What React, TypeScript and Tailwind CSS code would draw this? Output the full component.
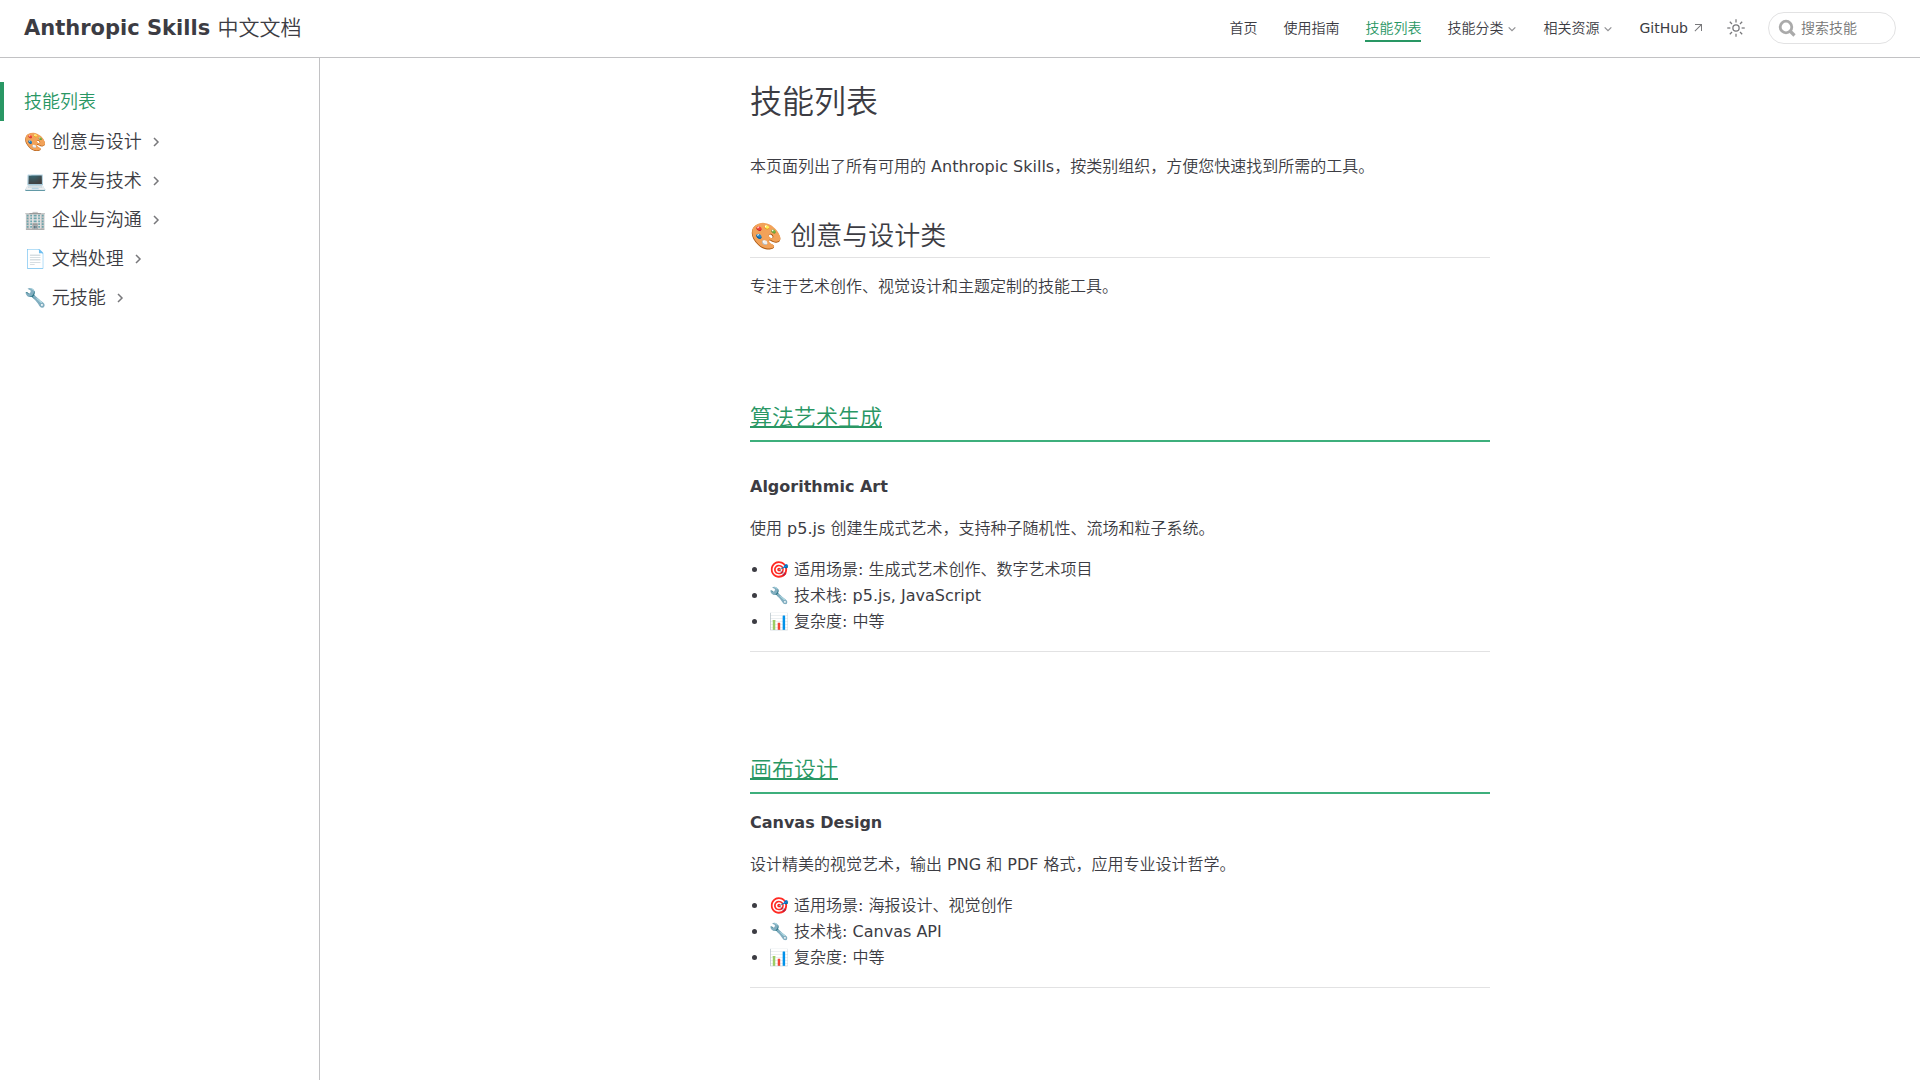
/**
 * 技能列表 — 文档站页面：顶部导航、左侧目录、正文。
 */

type NavItem = {
    label: string;
    kind: "link" | "menu" | "external";
    active?: boolean;
};

type Skill = {
    title: string;
    name: string;
    desc: string;
    points: string[];
    spaced?: boolean;
};

const NAV_ITEMS: NavItem[] = [
    { label: "首页", kind: "link" },
    { label: "使用指南", kind: "link" },
    { label: "技能列表", kind: "link", active: true },
    { label: "技能分类", kind: "menu" },
    { label: "相关资源", kind: "menu" },
    { label: "GitHub", kind: "external" },
];

const SIDEBAR_GROUPS = [
    "🎨 创意与设计",
    "💻 开发与技术",
    "🏢 企业与沟通",
    "📄 文档处理",
    "🔧 元技能",
];

const SKILLS: Skill[] = [
    {
        title: "算法艺术生成",
        name: "Algorithmic Art",
        desc: "使用 p5.js 创建生成式艺术，支持种子随机性、流场和粒子系统。",
        points: [
            "🎯 适用场景: 生成式艺术创作、数字艺术项目",
            "🔧 技术栈: p5.js, JavaScript",
            "📊 复杂度: 中等",
        ],
        spaced: true,
    },
    {
        title: "画布设计",
        name: "Canvas Design",
        desc: "设计精美的视觉艺术，输出 PNG 和 PDF 格式，应用专业设计哲学。",
        points: [
            "🎯 适用场景: 海报设计、视觉创作",
            "🔧 技术栈: Canvas API",
            "📊 复杂度: 中等",
        ],
    },
];

const Chevron = ({ className }: { className: string }) => (
    <svg
        viewBox="0 0 24 24"
        className={className}
        fill="none"
        stroke="currentColor"
        strokeWidth="3"
        aria-hidden="true"
    >
        <path d="M8 4l8 8-8 8" />
    </svg>
);

const ExternalArrow = () => (
    <svg viewBox="0 0 24 24" className="h-3 w-3 text-[#78787b]" fill="currentColor" aria-hidden="true">
        <path d="M6 4h14v14h-2V7.400L6.400 19 5 17.600 16.600 6H6z" />
    </svg>
);

const SunIcon = () => (
    <svg viewBox="0 0 32 32" className="h-5 w-5" fill="currentColor" aria-hidden="true">
        <path d="M16 12.005a4 4 0 1 1-4 4a4.005 4.005 0 0 1 4-4m0-2a6 6 0 1 0 6 6a6 6 0 0 0-6-6z" />
        <path d="M5.394 6.813l1.414-1.415l3.506 3.506L8.9 10.318z" />
        <path d="M2 15.005h5v2H2z" />
        <path d="M5.394 25.197L8.9 21.691l1.414 1.415l-3.506 3.505z" />
        <path d="M15 25.005h2v5h-2z" />
        <path d="M21.687 23.106l1.414-1.415l3.506 3.506l-1.414 1.414z" />
        <path d="M25 15.005h5v2h-5z" />
        <path d="M21.687 8.904l3.506-3.506l1.414 1.415l-3.506 3.505z" />
        <path d="M15 2.005h2v5h-2z" />
    </svg>
);

const Navbar = () => (
    <header className="flex h-[58px] items-center justify-between border-b border-[#c2c2c4] px-6 pb-[2px]">
        <a href="#" className="text-[21px] leading-8 font-bold">
            Anthropic Skills <span className="font-normal">中文文档</span>
        </a>

        <div className="flex items-center">
            <nav aria-label="主导航" className="flex items-center gap-[26px] text-sm">
                {NAV_ITEMS.map((item) =>
                    item.kind === "menu" ? (
                        <button key={item.label} type="button" className="flex items-center gap-1 leading-7">
                            {item.label}
                            <Chevron className="mt-[2px] h-[10px] w-[10px] rotate-90 text-[#929295]" />
                        </button>
                    ) : (
                        <a
                            key={item.label}
                            href="#"
                            className={
                                item.active
                                    ? "mt-[2px] border-b-2 border-[#299764] leading-6 text-[#299764]"
                                    : "flex items-center gap-1 leading-7"
                            }
                        >
                            {item.label}
                            {item.kind === "external" && <ExternalArrow />}
                        </a>
                    ),
                )}
            </nav>

            <button type="button" aria-label="切换主题" className="mx-[22px] text-[#78787b]">
                <SunIcon />
            </button>

            <label className="flex h-8 w-32 items-center gap-1 rounded-full border border-[#e2e2e3] pr-3 pl-2">
                <svg
                    viewBox="0 0 20 20"
                    className="h-5 w-5 shrink-0 text-[#aaaaaa]"
                    fill="none"
                    stroke="currentColor"
                    strokeWidth="2.8"
                    aria-hidden="true"
                >
                    <circle cx="9" cy="9" r="5.8" />
                    <path d="M13 13l4.500 4.500" strokeWidth="3.2" />
                </svg>
                <input
                    type="search"
                    aria-label="搜索技能"
                    placeholder="搜索技能"
                    className="w-full min-w-0 text-sm outline-none placeholder:text-[#757575]"
                />
            </label>
        </div>
    </header>
);

const Sidebar = () => (
    <aside aria-label="目录" className="w-80 shrink-0 border-r border-[#c2c2c4] pt-6 text-lg">
        <a href="#" className="block border-l-4 border-[#299764] pl-5 leading-[39px] text-[#299764]">
            技能列表
        </a>
        <ul className="mt-px">
            {SIDEBAR_GROUPS.map((group) => (
                <li key={group}>
                    <button type="button" className="flex w-full items-center gap-2 pl-6 leading-[39px]">
                        {group}
                        <Chevron className="h-3 w-3 text-[#78787b]" />
                    </button>
                </li>
            ))}
        </ul>
    </aside>
);

const SkillSection = ({ skill }: { skill: Skill }) => (
    <section className="border-b border-[#e2e2e3] pt-[104px] pb-4">
        <h3 className="border-b-2 border-[#3eaf7c] pb-2 text-[22px] leading-7">
            <a href="#" className="text-[#299764] underline decoration-2 underline-offset-1">
                {skill.title}
            </a>
        </h3>
        <p className={skill.spaced ? "mt-8 font-bold" : "mt-4 font-bold"}>{skill.name}</p>
        <p className="mt-4">{skill.desc}</p>
        <ul className="mt-[15px] list-disc pl-[19px]">
            {skill.points.map((point) => (
                <li key={point}>{point}</li>
            ))}
        </ul>
    </section>
);

export default function App() {
    return (
        <div
            lang="zh-CN"
            className="flex min-h-screen flex-col bg-white font-['DejaVu_Sans','Noto_Sans_CJK_SC_DemiLight','Noto_Sans_CJK_SC',sans-serif] text-[#3c3c43]"
        >
            <Navbar />
            <div className="flex grow">
                <Sidebar />
                <main className="min-w-0 grow">
                    <article className="mx-auto max-w-[740px] pt-5 pb-20 text-base leading-[26px]">
                        <h1 className="text-[32px] leading-[48px]">技能列表</h1>
                        <p className="mt-7">
                            本页面列出了所有可用的 Anthropic Skills，按类别组织，方便您快速找到所需的工具。
                        </p>
                        <h2 className="mt-10 border-b border-[#e2e2e3] pb-[5px] text-[26px] leading-8">🎨 创意与设计类</h2>
                        <p className="mt-4">专注于艺术创作、视觉设计和主题定制的技能工具。</p>
                        {SKILLS.map((skill) => (
                            <SkillSection key={skill.name} skill={skill} />
                        ))}
                    </article>
                </main>
            </div>
        </div>
    );
}
